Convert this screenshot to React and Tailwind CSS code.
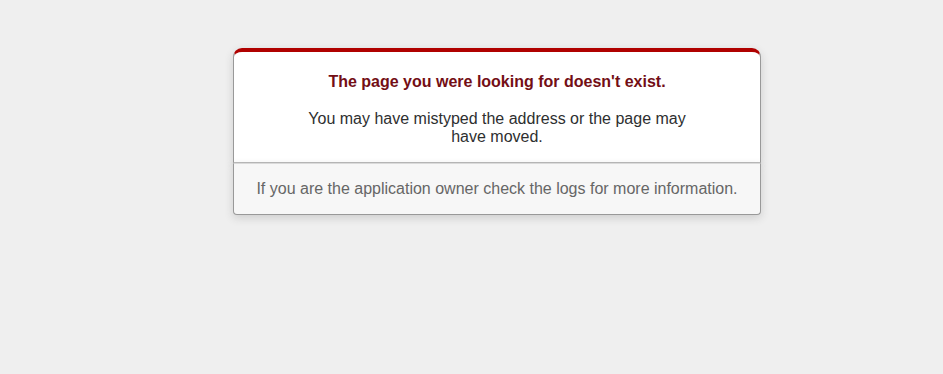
export default function App() {
  return (
    <div className="min-h-[374px] bg-[#EFEFEF] text-[#2E2F30] text-center text-[16px] font-['Liberation_Sans',Arial,sans-serif] pt-[48px]">
      <div className="w-[528px] ml-[233px]">
        <div className="border border-[#CCC] border-x-[#999] border-b-[#BBB] border-t-4 border-t-[#B00100] rounded-t-[9px] bg-white pt-[7px] px-[12%] shadow-[0_3px_8px_rgba(50,50,50,0.17)]">
          <h1 className="text-[16px] font-bold text-[#730E15] leading-[1.5em] my-[0.67em]">
            The page you were looking for doesn't exist.
          </h1>
          <p className="my-[1em] leading-[18px]">
            You may have mistyped the address or the page may have moved.
          </p>
        </div>
        <p className="mb-[1em] p-[1em] bg-[#F7F7F7] border border-[#CCC] border-x-[#999] border-b-[#999] border-t-[#DADADA] rounded-b-[4px] text-[#666] shadow-[0_3px_8px_rgba(50,50,50,0.17)] leading-[18px]">
          If you are the application owner check the logs for more information.
        </p>
      </div>
    </div>
  );
}
